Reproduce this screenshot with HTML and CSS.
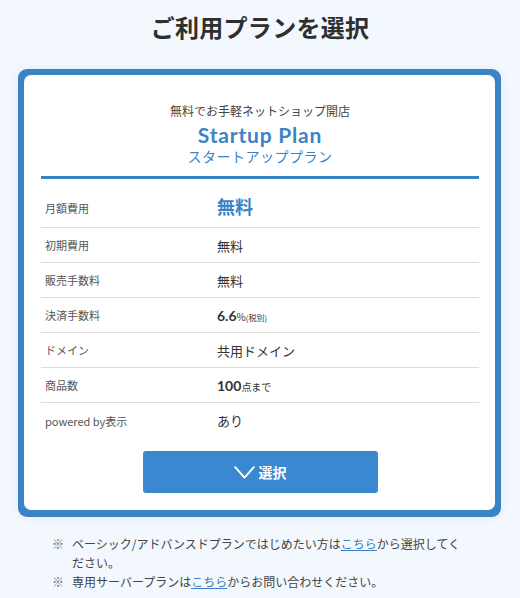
FILE: index.html
```html
<!DOCTYPE html>
<html lang="ja">
<head>
<meta charset="utf-8">
<title>ご利用プランを選択</title>
<link rel="stylesheet" href="styles.css">
</head>
<body>
<h1 class="page-title">ご利用プランを選択</h1>
<div class="card">
  <div class="card-inner">
    <div class="plan-head">
      <p class="plan-lead">無料でお手軽ネットショップ開店</p>
      <p class="plan-name">Startup Plan</p>
      <p class="plan-kana">スタートアッププラン</p>
    </div>
    <div class="spec">
      <div class="row row-first"><div class="label">月額費用</div><div class="value value-big">無料</div></div>
      <div class="row"><div class="label">初期費用</div><div class="value">無料</div></div>
      <div class="row"><div class="label">販売手数料</div><div class="value">無料</div></div>
      <div class="row"><div class="label">決済手数料</div><div class="value"><span class="num">6.6</span><span class="unit">%</span><span class="tiny">(税別)</span></div></div>
      <div class="row"><div class="label">ドメイン</div><div class="value">共用ドメイン</div></div>
      <div class="row"><div class="label">商品数</div><div class="value"><span class="num">100</span><span class="unit">点まで</span></div></div>
      <div class="row row-last"><div class="label">powered by表示</div><div class="value">あり</div></div>
    </div>
    <div class="btn-wrap">
      <a class="btn" href="#">
        <svg class="check" width="21" height="13" viewBox="0 0 21 13"><path d="M1.2 1.2 L10.5 11.6 L19.8 1.2" fill="none" stroke="#fff" stroke-width="2" stroke-linecap="round" stroke-linejoin="round"/></svg>
        <span>選択</span>
      </a>
    </div>
  </div>
</div>
<ul class="notes">
  <li><span class="mark">※</span><span class="note-text">ベーシック/アドバンスドプランではじめたい方は<a href="#">こちら</a>から選択してください。</span></li>
  <li><span class="mark">※</span><span class="note-text">専用サーバープランは<a href="#">こちら</a>からお問い合わせください。</span></li>
</ul>
</body>
</html>
```
FILE: styles.css
```css
html, body {
  margin: 0;
  padding: 0;
}
body {
  background: #f2f8fd;
  font-family: "Noto Sans CJK JP", "Noto Sans", sans-serif;
  color: #333;
  width: 520px;
}
p { margin: 0; }

.page-title {
  margin: 0 0 24px;
  padding-top: 9px;
  font-size: 24px;
  line-height: 36px;
  font-weight: 700;
  text-align: center;
  color: #2f2f2f;
  letter-spacing: 0.3px;
}

.card {
  margin: 0 19px 0 18px;
  background: #3a83c6;
  border-radius: 9px;
  padding: 6px 6px 7px 6px;
  box-shadow: 0 0 8px rgba(40, 80, 120, 0.08);
}
.card-inner {
  background: #fff;
  border-radius: 7px;
  padding: 27px 16px 17px 17px;
}

.plan-head {
  text-align: center;
  border-bottom: 3px solid #3a83c6;
  padding-bottom: 11px;
}
.plan-lead {
  font-size: 12px;
  line-height: 18px;
  color: #444;
}
.plan-name {
  margin-top: 3px;
  font-family: "Lato", "Noto Sans", sans-serif;
  font-weight: 700;
  font-size: 21px;
  line-height: 24px;
  color: #3a83c6;
  letter-spacing: 0.8px;
}
.plan-kana {
  font-size: 14px;
  line-height: 18px;
  color: #3a83c6;
  letter-spacing: 0.5px;
}

.spec {
  display: flex;
  flex-direction: column;
}
.row {
  display: grid;
  grid-template-columns: 176px 1fr;
  align-items: center;
  height: 34px;
  border-bottom: 1px solid #dedede;
}
.row-first {
  padding-top: 9px;
  box-sizing: border-box;
  height: 49px;
}
.row-last {
  border-bottom: none;
  height: 35px;
}
.label {
  padding-left: 4px;
  font-size: 11px;
  color: #555;
}
.value {
  font-size: 13px;
  color: #333;
  font-weight: 400;
}
.value-big {
  font-size: 18px;
  font-weight: 700;
  color: #3a83c6;
  margin-top: -4px;
}
.num {
  font-family: "Lato", "Noto Sans", sans-serif;
  font-weight: 700;
  font-size: 14px;
  color: #333;
}
.unit {
  font-size: 10px;
}
.tiny {
  font-size: 8px;
}

.btn-wrap {
  display: flex;
  justify-content: center;
  margin-top: 13px;
}
.btn {
  width: 235px;
  height: 42px;
  border-radius: 3px;
  background: #3a88d0;
  color: #fff;
  text-decoration: none;
  display: flex;
  align-items: center;
  justify-content: center;
  gap: 4px;
  font-size: 14px;
  font-weight: 700;
}
.check {
  display: block;
  margin-top: 1px;
}

.notes {
  list-style: none;
  margin: 17px 0 0;
  padding: 0 55px 0 52px;
  font-size: 12px;
  line-height: 19px;
  color: #444;
}
.notes li {
  display: flex;
}
.mark {
  width: 20px;
  flex: none;
  color: #666;
}
.note-text {
  flex: 1;
}
.notes a {
  color: #3a7cc0;
  text-decoration: underline;
}
```
